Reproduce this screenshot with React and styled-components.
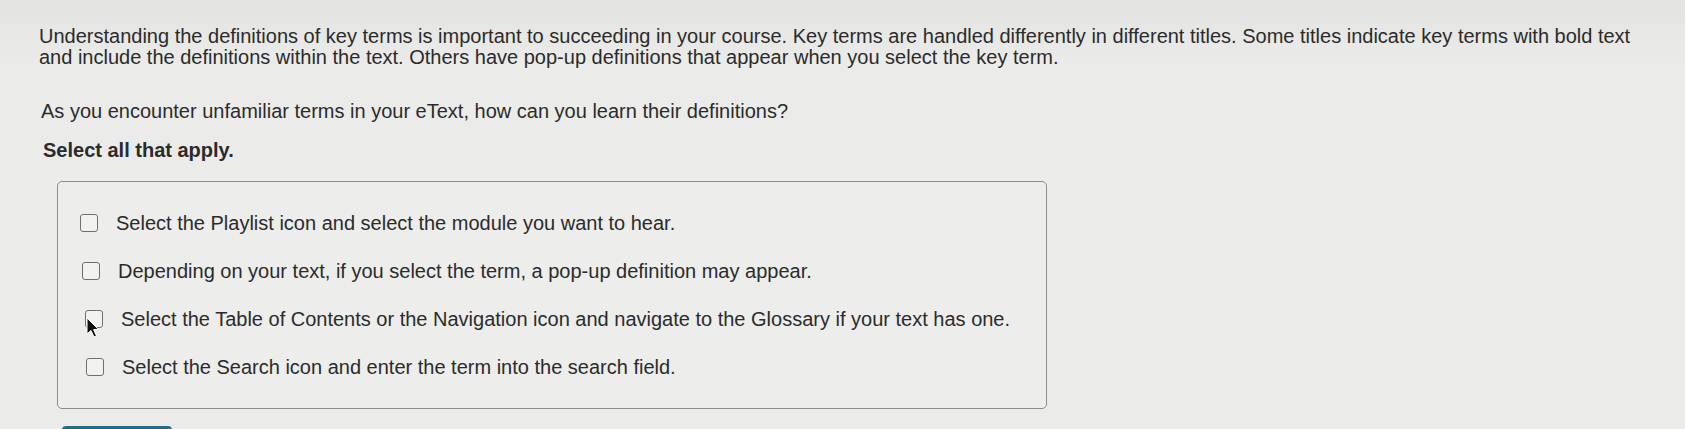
import React from 'react';
import styled, { createGlobalStyle } from 'styled-components';

const GlobalStyle = createGlobalStyle`
  html, body {
    margin: 0;
    padding: 0;
    background: linear-gradient(180deg, #e3e3e1 0%, #ebebe9 15%, #ebebe9 100%);
    overflow: hidden;
  }
`;

const Page = styled.div`
  width: 1685px;
  height: 429px;
  box-sizing: border-box;
  padding: 26px 0 0 39px;
  font-family: "Liberation Sans", Arial, Helvetica, sans-serif;
  color: #2b2b2b;
  font-size: 20px;
  line-height: 21px;
`;

const Intro = styled.p`
  margin: 0;
  width: 1612px;
`;

const Question = styled.p`
  margin: 33px 0 0 2px;
`;

const Instruction = styled.p`
  margin: 18px 0 0 4px;
  font-weight: bold;
`;

const AnswerBox = styled.div`
  margin: 20px 0 0 18px;
  width: 990px;
  box-sizing: border-box;
  border: 1px solid #8d8d8b;
  border-radius: 5px;
  background: #ededeb;
  padding: 29px 0 29px 22px;
  display: flex;
  flex-direction: column;
  gap: 24px;
`;

const Option = styled.label`
  display: flex;
  align-items: center;
  gap: 18px;
  height: 24px;
  padding-left: ${(p) => p.$shift || 0}px;
  cursor: pointer;
`;

const Box = styled.span`
  position: relative;
  flex: 0 0 auto;
  width: 16px;
  height: 16px;
  border: 1.5px solid #6f6f6d;
  border-radius: 3px;
  background: #f2f2f0;
`;

const Pointer = styled.svg`
  position: absolute;
  left: 0px;
  top: 6px;
  width: 14px;
  height: 22px;
`;

const SubmitButton = styled.button`
  display: block;
  margin: 17px 0 0 23px;
  width: 110px;
  height: 40px;
  border: none;
  border-radius: 4px;
  background: #1d6d8c;
`;

const options = [
  { text: 'Select the Playlist icon and select the module you want to hear.', shift: 0 },
  { text: 'Depending on your text, if you select the term, a pop-up definition may appear.', shift: 2 },
  { text: 'Select the Table of Contents or the Navigation icon and navigate to the Glossary if your text has one.', shift: 5, hover: true },
  { text: 'Select the Search icon and enter the term into the search field.', shift: 6 },
];

export default function App() {
  return (
    <>
      <GlobalStyle />
      <Page>
        <Intro>
          Understanding the definitions of key terms is important to succeeding in your course. Key terms are handled differently in different titles. Some titles indicate key terms with bold text and include the definitions within the text. Others have pop-up definitions that appear when you select the key term.
        </Intro>
        <Question>As you encounter unfamiliar terms in your eText, how can you learn their definitions?</Question>
        <Instruction>Select all that apply.</Instruction>
        <AnswerBox>
          {options.map((o) => (
            <Option key={o.text} $shift={o.shift}>
              <Box>
                {o.hover && (
                  <Pointer viewBox="0 0 14 22">
                    <path d="M1 1 L1 17 L5 13.5 L8 20 L10.5 19 L7.6 12.6 L12.5 12.4 Z" fill="#111" stroke="#fff" strokeWidth="1" strokeLinejoin="round" />
                  </Pointer>
                )}
              </Box>
              <span>{o.text}</span>
            </Option>
          ))}
        </AnswerBox>
        <SubmitButton aria-label="Submit" />
      </Page>
    </>
  );
}
